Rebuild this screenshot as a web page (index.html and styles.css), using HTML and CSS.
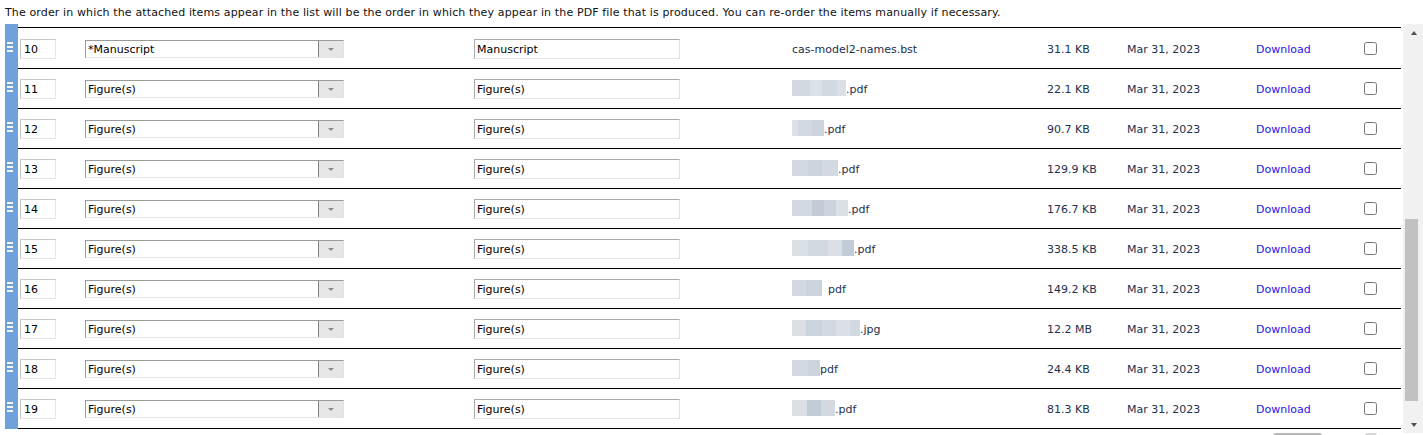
FILE: index.html
```html
<!DOCTYPE html>
<html lang="en">
<head>
<meta charset="utf-8">
<title>Attached items</title>
<link rel="stylesheet" href="styles.css">
</head>
<body>
<p class="intro">The order in which the attached items appear in the list will be the order in which they appear in the PDF file that is produced. You can re-order the items manually if necessary.</p>
<div class="scroller">
  <div class="list">
    <div class="row cut"><div class="handle"></div><div class="main"></div></div>

    <div class="row"><div class="handle"><i></i><i></i><i></i></div><div class="main">
      <div class="cell"><input class="num" type="text" value="10"></div>
      <div class="cell"><div class="select"><span class="sel-text">*Manuscript</span><span class="sel-btn"><b></b></span></div></div>
      <div class="cell"><input class="desc" type="text" value="Manuscript"></div>
      <div class="cell file">cas-model2-names.bst</div>
      <div class="cell info">31.1 KB</div>
      <div class="cell info">Mar 31, 2023</div>
      <div class="cell txt"><a class="dl" href="#">Download</a></div>
      <div class="cell"><input class="chk" type="checkbox"></div>
    </div></div>

    <div class="row"><div class="handle"><i></i><i></i><i></i></div><div class="main">
      <div class="cell"><input class="num" type="text" value="11"></div>
      <div class="cell"><div class="select"><span class="sel-text">Figure(s)</span><span class="sel-btn"><b></b></span></div></div>
      <div class="cell"><input class="desc" type="text" value="Figure(s)"></div>
      <div class="cell file"><span class="blur"><s class="b1" style="width:18px"></s><s class="b2" style="width:12px"></s><s class="b1" style="width:15px"></s><s class="b2" style="width:9px"></s></span>.pdf</div>
      <div class="cell info">22.1 KB</div>
      <div class="cell info">Mar 31, 2023</div>
      <div class="cell txt"><a class="dl" href="#">Download</a></div>
      <div class="cell"><input class="chk" type="checkbox"></div>
    </div></div>

    <div class="row"><div class="handle"><i></i><i></i><i></i></div><div class="main">
      <div class="cell"><input class="num" type="text" value="12"></div>
      <div class="cell"><div class="select"><span class="sel-text">Figure(s)</span><span class="sel-btn"><b></b></span></div></div>
      <div class="cell"><input class="desc" type="text" value="Figure(s)"></div>
      <div class="cell file"><span class="blur"><s class="b2" style="width:6px"></s><s class="b1" style="width:14px"></s><s class="b3" style="width:12px"></s></span>.pdf</div>
      <div class="cell info">90.7 KB</div>
      <div class="cell info">Mar 31, 2023</div>
      <div class="cell txt"><a class="dl" href="#">Download</a></div>
      <div class="cell"><input class="chk" type="checkbox"></div>
    </div></div>

    <div class="row"><div class="handle"><i></i><i></i><i></i></div><div class="main">
      <div class="cell"><input class="num" type="text" value="13"></div>
      <div class="cell"><div class="select"><span class="sel-text">Figure(s)</span><span class="sel-btn"><b></b></span></div></div>
      <div class="cell"><input class="desc" type="text" value="Figure(s)"></div>
      <div class="cell file"><span class="blur"><s class="b1" style="width:16px"></s><s class="b3" style="width:14px"></s><s class="b1" style="width:16px"></s></span>.pdf</div>
      <div class="cell info">129.9 KB</div>
      <div class="cell info">Mar 31, 2023</div>
      <div class="cell txt"><a class="dl" href="#">Download</a></div>
      <div class="cell"><input class="chk" type="checkbox"></div>
    </div></div>

    <div class="row"><div class="handle"><i></i><i></i><i></i></div><div class="main">
      <div class="cell"><input class="num" type="text" value="14"></div>
      <div class="cell"><div class="select"><span class="sel-text">Figure(s)</span><span class="sel-btn"><b></b></span></div></div>
      <div class="cell"><input class="desc" type="text" value="Figure(s)"></div>
      <div class="cell file"><span class="blur"><s class="b1" style="width:20px"></s><s class="b4" style="width:12px"></s><s class="b3" style="width:12px"></s><s class="b2" style="width:12px"></s></span>.pdf</div>
      <div class="cell info">176.7 KB</div>
      <div class="cell info">Mar 31, 2023</div>
      <div class="cell txt"><a class="dl" href="#">Download</a></div>
      <div class="cell"><input class="chk" type="checkbox"></div>
    </div></div>

    <div class="row"><div class="handle"><i></i><i></i><i></i></div><div class="main">
      <div class="cell"><input class="num" type="text" value="15"></div>
      <div class="cell"><div class="select"><span class="sel-text">Figure(s)</span><span class="sel-btn"><b></b></span></div></div>
      <div class="cell"><input class="desc" type="text" value="Figure(s)"></div>
      <div class="cell file"><span class="blur"><s class="b2" style="width:16px"></s><s class="b1" style="width:20px"></s><s class="b2" style="width:14px"></s><s class="b4" style="width:12px"></s></span>.pdf</div>
      <div class="cell info">338.5 KB</div>
      <div class="cell info">Mar 31, 2023</div>
      <div class="cell txt"><a class="dl" href="#">Download</a></div>
      <div class="cell"><input class="chk" type="checkbox"></div>
    </div></div>

    <div class="row"><div class="handle"><i></i><i></i><i></i></div><div class="main">
      <div class="cell"><input class="num" type="text" value="16"></div>
      <div class="cell"><div class="select"><span class="sel-text">Figure(s)</span><span class="sel-btn"><b></b></span></div></div>
      <div class="cell"><input class="desc" type="text" value="Figure(s)"></div>
      <div class="cell file"><span class="blur gap"><s class="b1" style="width:14px"></s><s class="b3" style="width:16px"></s></span>pdf</div>
      <div class="cell info">149.2 KB</div>
      <div class="cell info">Mar 31, 2023</div>
      <div class="cell txt"><a class="dl" href="#">Download</a></div>
      <div class="cell"><input class="chk" type="checkbox"></div>
    </div></div>

    <div class="row"><div class="handle"><i></i><i></i><i></i></div><div class="main">
      <div class="cell"><input class="num" type="text" value="17"></div>
      <div class="cell"><div class="select"><span class="sel-text">Figure(s)</span><span class="sel-btn"><b></b></span></div></div>
      <div class="cell"><input class="desc" type="text" value="Figure(s)"></div>
      <div class="cell file"><span class="blur"><s class="b2" style="width:14px"></s><s class="b3" style="width:16px"></s><s class="b1" style="width:14px"></s><s class="b2" style="width:14px"></s><s class="b1" style="width:10px"></s></span>.jpg</div>
      <div class="cell info">12.2 MB</div>
      <div class="cell info">Mar 31, 2023</div>
      <div class="cell txt"><a class="dl" href="#">Download</a></div>
      <div class="cell"><input class="chk" type="checkbox"></div>
    </div></div>

    <div class="row"><div class="handle"><i></i><i></i><i></i></div><div class="main">
      <div class="cell"><input class="num" type="text" value="18"></div>
      <div class="cell"><div class="select"><span class="sel-text">Figure(s)</span><span class="sel-btn"><b></b></span></div></div>
      <div class="cell"><input class="desc" type="text" value="Figure(s)"></div>
      <div class="cell file"><span class="blur"><s class="b1" style="width:16px"></s><s class="b3" style="width:12px"></s></span>pdf</div>
      <div class="cell info">24.4 KB</div>
      <div class="cell info">Mar 31, 2023</div>
      <div class="cell txt"><a class="dl" href="#">Download</a></div>
      <div class="cell"><input class="chk" type="checkbox"></div>
    </div></div>

    <div class="row"><div class="handle"><i></i><i></i><i></i></div><div class="main">
      <div class="cell"><input class="num" type="text" value="19"></div>
      <div class="cell"><div class="select"><span class="sel-text">Figure(s)</span><span class="sel-btn"><b></b></span></div></div>
      <div class="cell"><input class="desc" type="text" value="Figure(s)"></div>
      <div class="cell file"><span class="blur"><s class="b2" style="width:15px"></s><s class="b4" style="width:14px"></s><s class="b1" style="width:14px"></s></span>.pdf</div>
      <div class="cell info">81.3 KB</div>
      <div class="cell info">Mar 31, 2023</div>
      <div class="cell txt"><a class="dl" href="#">Download</a></div>
      <div class="cell"><input class="chk" type="checkbox"></div>
    </div></div>
  </div>
  <div class="scrollbar">
    <div class="sb-btn"><span class="tri up"></span></div>
    <div class="sb-track"><div class="sb-thumb"></div></div>
    <div class="sb-btn"><span class="tri down"></span></div>
  </div>
</div>
<div class="footer">
  <span class="fbtn wide"></span>
  <span class="fbtn small"></span>
</div>
</body>
</html>
```

FILE: styles.css
```css
html, body {
  margin: 0;
  padding: 0;
  background: #fff;
  overflow: hidden;
}

body {
  padding-left: 5px;
  font-family: "DejaVu Sans", Verdana, sans-serif;
  font-size: 11px;
  color: #000;
}

.intro {
  margin: 0;
  height: 24px;
  box-sizing: border-box;
  padding-top: 6px;
  font-family: "DejaVu Sans", Verdana, sans-serif;
  font-size: 11px;
  letter-spacing: 0.13px;
  line-height: 14px;
  color: #111;
  white-space: nowrap;
}

.scroller {
  display: flex;
  height: 409px;
  overflow: hidden;
}

.list {
  flex: 1;
  min-width: 0;
  overflow: hidden;
}

.row {
  display: flex;
}

.handle {
  width: 13px;
  flex: none;
  background: #6fa2da;
  display: flex;
  flex-direction: column;
  justify-content: center;
  gap: 2px;
  padding: 0 0 5px 2px;
  box-sizing: border-box;
}

.handle i {
  display: block;
  width: 6px;
  height: 2px;
  background: #f2f6fc;
}

.main {
  display: grid;
  grid-template-columns: 67px 389px 318px 255px 80px 129px 108px 37px;
  align-items: center;
  height: 39px;
  border-bottom: 1px solid #000;
}

.row.cut .main {
  height: 3px;
  width: 1383px;
}

.cell {
  display: flex;
  align-items: center;
  white-space: nowrap;
}

.file,
.info,
.txt {
  padding-top: 2px;
}

.num,
.desc {
  box-sizing: border-box;
  height: 20px;
  margin: 0;
  padding-top: 2px;
  padding-bottom: 0;
  font-family: "DejaVu Sans", Verdana, sans-serif;
  font-size: 11px;
  color: #000;
  border: 1px solid;
  border-color: #a9a9a9 #e3e3e3 #e3e3e3 #a9a9a9;
  background: #fff;
  outline: none;
}

.num {
  width: 36px;
  margin-left: 2px;
  padding-left: 3px;
  padding-right: 3px;
  border-color: #c8c8c8 #e6e6e6 #e6e6e6 #c8c8c8;
}

.desc {
  width: 206px;
  padding-left: 2px;
  padding-right: 2px;
}

.select {
  box-sizing: border-box;
  width: 259px;
  height: 18px;
  display: flex;
  border: 1px solid;
  border-color: #9a9a9a #e3e3e3 #e3e3e3 #9a9a9a;
  background: #fff;
}

.sel-text {
  flex: 1;
  padding-left: 2px;
  padding-top: 1px;
  line-height: 16px;
  color: #000;
}

.sel-btn {
  width: 24px;
  background: #e6e6e6;
  border-left: 1px solid #7f7f7f;
  display: flex;
  align-items: center;
  justify-content: center;
}

.sel-btn b {
  width: 0;
  height: 0;
  border-left: 3px solid transparent;
  border-right: 3px solid transparent;
  border-top: 3px solid #8a8a8a;
  margin-top: 2px;
}

.file,
.info {
  color: #22304e;
}

.blur {
  display: inline-flex;
  height: 16px;
  margin-top: -4px;
}

.blur.gap {
  margin-right: 6px;
}

.blur s {
  display: block;
  height: 16px;
}

.b1 { background: #d3d9e0; }
.b2 { background: #dbe0e6; }
.b3 { background: #cbd3dc; }
.b4 { background: #c2ccd6; }

.dl {
  color: #2a14e8;
  text-decoration: none;
}

.chk {
  margin: 0;
  width: 13px;
  height: 13px;
}

.footer {
  display: flex;
  padding-top: 0;
}

.fbtn {
  display: block;
  height: 10px;
  border-top: 2px solid #b8b8b8;
  border-radius: 3px 3px 0 0;
}

.fbtn.wide {
  width: 49px;
  margin-left: 1268px;
}

.fbtn.small {
  width: 12px;
  border-top-color: #d6d6d6;
  margin-left: 43px;
}

.scrollbar {
  width: 20px;
  flex: none;
  background: #f1f1f1;
  display: flex;
  flex-direction: column;
}

.sb-btn {
  height: 17px;
  display: flex;
  align-items: center;
  justify-content: center;
  flex: none;
}

.tri {
  width: 0;
  height: 0;
  border-left: 3.5px solid transparent;
  border-right: 3.5px solid transparent;
  margin-left: 1px;
}

.tri.up {
  border-bottom: 4px solid #505050;
}

.tri.down {
  border-top: 4px solid #505050;
}

.sb-track {
  flex: 1;
}

.sb-thumb {
  margin-top: 178px;
  margin-left: 2px;
  width: 13px;
  height: 182px;
  background: #c1c1c1;
}
```
